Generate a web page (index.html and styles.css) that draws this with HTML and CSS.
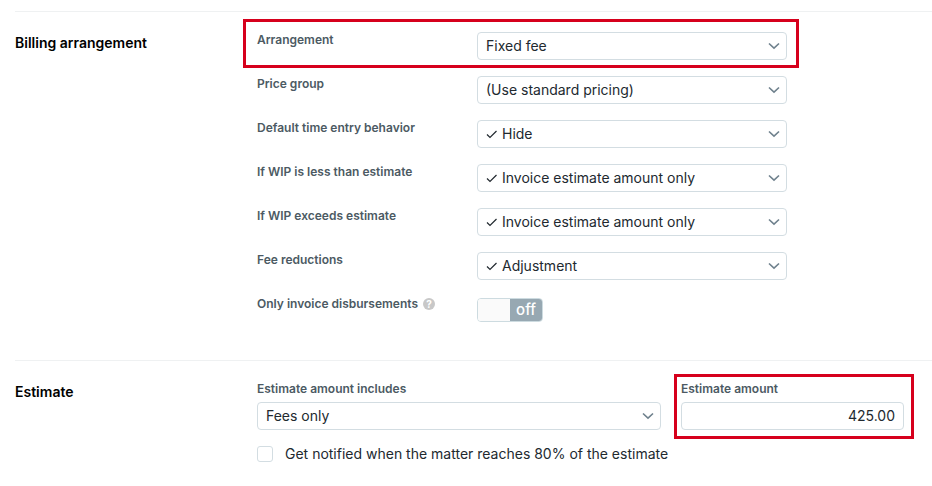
FILE: index.html
```html
<!DOCTYPE html>
<html lang="en">
<head>
    <meta charset="UTF-8">
    <meta name="viewport" content="width=device-width, initial-scale=1.0">
    <title>Matter Billing</title>
    <link rel="stylesheet" href="styles.css">
</head>
<body>
    <svg class="symbols" aria-hidden="true">
        <symbol id="chevron" viewBox="0 0 12 8">
            <path d="M1 1.5L6 6.2L11 1.5" fill="none" stroke="currentColor" stroke-width="1.6"/>
        </symbol>
        <symbol id="check" viewBox="0 0 12 10">
            <path d="M1 5.5L4 8.5L10.5 2" fill="none" stroke="currentColor" stroke-width="1.2"/>
        </symbol>
    </svg>

    <form>
        <section class="section">
            <h2>Billing arrangement</h2>
            <div class="section-body rows">
                <div class="row highlight">
                    <label for="arrangement">Arrangement</label>
                    <div class="select">
                        <select id="arrangement"><option>Fixed fee</option></select>
                        <svg class="chevron"><use href="#chevron"/></svg>
                    </div>
                </div>
                <div class="row">
                    <label for="priceGroup">Price group</label>
                    <div class="select">
                        <select id="priceGroup"><option>(Use standard pricing)</option></select>
                        <svg class="chevron"><use href="#chevron"/></svg>
                    </div>
                </div>
                <div class="row">
                    <label for="timeEntry">Default time entry behavior</label>
                    <div class="select checked">
                        <svg class="check"><use href="#check"/></svg>
                        <select id="timeEntry"><option>Hide</option></select>
                        <svg class="chevron"><use href="#chevron"/></svg>
                    </div>
                </div>
                <div class="row">
                    <label for="wipLess">If WIP is less than estimate</label>
                    <div class="select checked">
                        <svg class="check"><use href="#check"/></svg>
                        <select id="wipLess"><option>Invoice estimate amount only</option></select>
                        <svg class="chevron"><use href="#chevron"/></svg>
                    </div>
                </div>
                <div class="row">
                    <label for="wipExceeds">If WIP exceeds estimate</label>
                    <div class="select checked">
                        <svg class="check"><use href="#check"/></svg>
                        <select id="wipExceeds"><option>Invoice estimate amount only</option></select>
                        <svg class="chevron"><use href="#chevron"/></svg>
                    </div>
                </div>
                <div class="row">
                    <label for="feeReductions">Fee reductions</label>
                    <div class="select checked">
                        <svg class="check"><use href="#check"/></svg>
                        <select id="feeReductions"><option>Adjustment</option></select>
                        <svg class="chevron"><use href="#chevron"/></svg>
                    </div>
                </div>
                <div class="row">
                    <label for="disbursements">Only invoice disbursements <span class="help">?</span></label>
                    <div class="toggle">
                        <input type="checkbox" id="disbursements">
                        <span>off</span>
                    </div>
                </div>
            </div>
        </section>

        <section class="section">
            <h2>Estimate</h2>
            <div class="section-body">
                <div class="fields">
                    <div class="field">
                        <label for="includes">Estimate amount includes</label>
                        <div class="select">
                            <select id="includes"><option>Fees only</option></select>
                            <svg class="chevron"><use href="#chevron"/></svg>
                        </div>
                    </div>
                    <div class="field highlight">
                        <label for="amount">Estimate amount</label>
                        <input type="text" id="amount" class="amount" value="425.00">
                    </div>
                </div>
                <div class="notify">
                    <input type="checkbox" id="notify">
                    <label for="notify">Get notified when the matter reaches 80% of the estimate</label>
                </div>
            </div>
        </section>
    </form>
</body>
</html>
```

FILE: styles.css
```css
* {
    box-sizing: border-box;
}

body {
    margin: 11px 0 0 15px;
    background: #fff;
    color: #22292f;
    font-family: Inter, "Liberation Sans", sans-serif;
    font-size: 14px;
}

.symbols {
    display: none;
}

.section {
    display: flex;
    padding: 20px 28px 36px 0;
    border-top: 1px solid #eff1f2;
}

h2 {
    flex: 0 0 242px;
    margin: 0;
    color: #000;
    font-size: 14px;
    font-weight: 600;
    line-height: 22px;
}

.section-body {
    flex: 1;
    min-width: 0;
}

.rows {
    display: flex;
    flex-direction: column;
    align-items: flex-start;
    gap: 16px;
}

.row {
    display: flex;
    min-height: 28px;
    align-items: flex-start;
}

.row label,
.field label {
    color: #4c5a63;
    font-size: 12px;
    font-weight: 600;
    line-height: 16px;
}

.row label {
    display: flex;
    flex: 0 0 220px;
    align-items: center;
    gap: 5px;
}

.row .select {
    width: 310px;
}

/* selects and inputs */
.select {
    position: relative;
}

select,
.amount {
    display: block;
    width: 100%;
    height: 28px;
    padding: 0 8px 1px;
    border: 1px solid #d3dde2;
    border-radius: 4px;
    background: #fff;
    color: #22292f;
    font-family: inherit;
    font-size: 14px;
    appearance: none;
}

.checked select {
    padding-left: 24px;
}

.amount {
    text-align: right;
}

.chevron {
    position: absolute;
    top: 10px;
    right: 7px;
    width: 12px;
    height: 8px;
    color: #6f818d;
    pointer-events: none;
}

.check {
    position: absolute;
    top: 9px;
    left: 9px;
    width: 12px;
    height: 10px;
    pointer-events: none;
}

.help {
    width: 12px;
    height: 12px;
    border-radius: 50%;
    background: #c8c8c8;
    color: #fff;
    font-size: 10px;
    font-weight: 700;
    line-height: 12px;
    text-align: center;
}

.toggle {
    display: flex;
    width: 66px;
    height: 24px;
    margin-top: 2px;
    border: 1px solid #cddbe0;
    border-radius: 4px;
    overflow: hidden;
}

.toggle input {
    flex: 1;
    margin: 0;
    background: #fafafa;
    appearance: none;
}

.toggle span {
    flex: 1;
    background: #97a8b2;
    color: #fff;
    font-size: 15px;
    font-weight: 500;
    line-height: 22px;
    text-align: center;
}

/* estimate */
.fields {
    display: grid;
    grid-template-columns: 1fr 223px;
    gap: 20px;
}

.field {
    display: flex;
    flex-direction: column;
    gap: 5px;
}

.notify {
    display: flex;
    align-items: center;
    gap: 12px;
    margin-top: 14px;
    line-height: 20px;
}

.notify input {
    width: 16px;
    height: 16px;
    margin: 0;
    border: 1px solid #d3dde2;
    border-radius: 3px;
    appearance: none;
}

/* red callout frames */
.highlight {
    position: relative;
}

.highlight::after {
    content: "";
    position: absolute;
    inset: -13px -12px -8px -14px;
    border: 3px solid #d6001c;
    pointer-events: none;
}

.field.highlight::after {
    inset: -7px -10px -9px -7px;
}
```
